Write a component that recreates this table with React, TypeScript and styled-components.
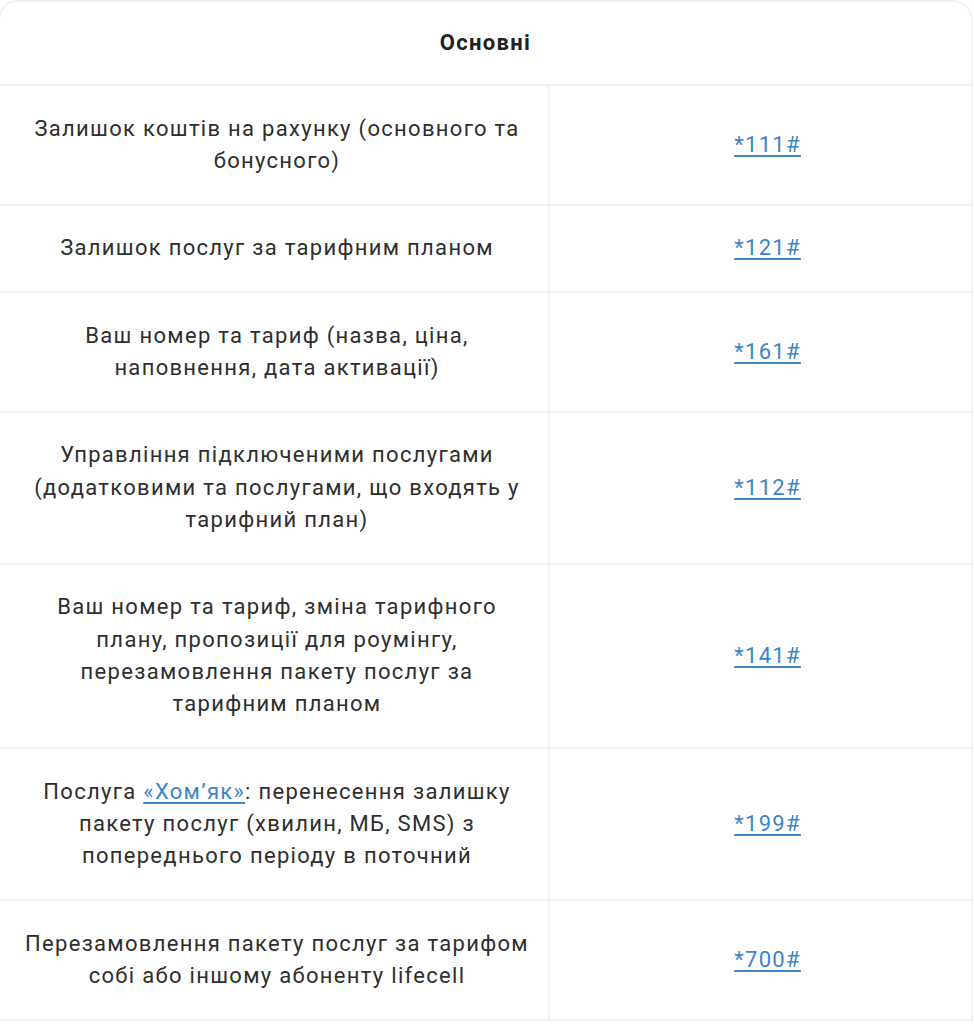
import React from 'react'
import styled, { createGlobalStyle } from 'styled-components'

const GlobalStyle = createGlobalStyle`
  body {
    margin: 0;
    background: #fff;
    font-family: Roboto, "Noto Sans", sans-serif;
  }
`

const Wrapper = styled.div`
  box-sizing: border-box;
  margin-left: -2px;
  width: 975px;
  border: 2px solid #f2f2f2;
  border-bottom: none;
  border-radius: 20px 20px 0 0;
  overflow: hidden;
`

const Table = styled.table`
  width: 100%;
  border-collapse: separate;
  border-spacing: 0;
  table-layout: fixed;
  color: #2e2e2e;
  font-size: 22px;
  line-height: 32.35px;
  letter-spacing: 1.3px;
`

const HeadCell = styled.th`
  height: 82px;
  padding: 0;
  font-weight: 700;
  color: #222;
  text-align: center;
  border-bottom: 2px solid #f2f2f2;
`

const TextCell = styled.td`
  padding: 26.5px 14px 26.5px 20px;
  text-align: center;
  vertical-align: middle;
  border-bottom: 2px solid #f2f2f2;
  border-right: 2px solid #f2f2f2;
`

const CodeCell = styled.td`
  padding: 26.5px 0 26.5px 14px;
  text-align: center;
  vertical-align: middle;
  border-bottom: 2px solid #f2f2f2;
`

const Link = styled.a`
  color: #3d85c6;
  text-decoration: underline;
  text-decoration-thickness: 1.5px;
  text-underline-offset: 3px;
`

interface Row {
  text: React.ReactNode
  code: string
}

const rows: Row[] = [
  { text: 'Залишок коштів на рахунку (основного та бонусного)', code: '*111#' },
  { text: 'Залишок послуг за тарифним планом', code: '*121#' },
  { text: 'Ваш номер та тариф (назва, ціна, наповнення, дата активації)', code: '*161#' },
  {
    text: 'Управління підключеними послугами (додатковими та послугами, що входять у тарифний план)',
    code: '*112#',
  },
  {
    text: 'Ваш номер та тариф, зміна тарифного плану, пропозиції для роумінгу, перезамовлення пакету послуг за тарифним планом',
    code: '*141#',
  },
  {
    text: (
      <>
        Послуга <Link href="#">«Хом’як»</Link>: перенесення залишку пакету послуг (хвилин, МБ, SMS) з
        попереднього періоду в поточний
      </>
    ),
    code: '*199#',
  },
  { text: 'Перезамовлення пакету послуг за тарифом собі або іншому абоненту lifecell', code: '*700#' },
]

export default function App() {
  return (
    <>
      <GlobalStyle />
      <Wrapper>
        <Table>
          <colgroup>
            <col style={{ width: 550 }} />
            <col />
          </colgroup>
          <thead>
            <tr>
              <HeadCell colSpan={2}>Основні</HeadCell>
            </tr>
          </thead>
          <tbody>
            {rows.map((row, i) => (
              <tr key={i}>
                <TextCell>{row.text}</TextCell>
                <CodeCell>
                  <Link href="#">{row.code}</Link>
                </CodeCell>
              </tr>
            ))}
          </tbody>
        </Table>
      </Wrapper>
    </>
  )
}
